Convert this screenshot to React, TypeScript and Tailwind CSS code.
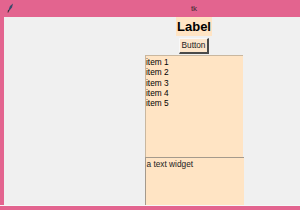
import React from "react";

export default function App() {
  const font = { fontFamily: '"Liberation Sans", Arial, sans-serif' };
  return (
    <div className="w-[300px] h-[210px] overflow-hidden bg-[#e3648f]" style={font}>
      <div className="w-[388px] flex flex-col">
        <div className="h-[17px] relative flex items-center bg-[#e3648f]">
          <svg className="absolute left-[7px] top-[3px]" width="7" height="10" viewBox="0 0 7 10">
            <path d="M6 0.5 L3 3 L1.5 7 L1 9.5 L2.5 7.5 L5 4.5 Z" fill="#3b4a6b" />
            <path d="M1.5 7 L1 9.5" stroke="#222" strokeWidth="0.8" />
          </svg>
          <div className="flex-1 text-center text-[8px] leading-[17px] text-[#3a2a30]">tk</div>
        </div>
        <div className="flex">
          <div className="w-[4px] bg-[#e3648f]" />
          <div className="flex-1 h-[188px] bg-[#f0f0f0] flex flex-col items-center">
            <div className="h-[19px] px-[1px] bg-[#ffe4c4] text-[13px] leading-[19px] font-bold text-black">Label</div>
            <div className="mt-[2px] h-[16px] w-[30px] bg-[#fde6cc] border-t border-l border-[#f8f8f8] border-r-2 border-b-2 border-r-[#4a4a4a] border-b-[#4a4a4a] flex items-center justify-center text-[8.3px] text-[#222]">
              Button
            </div>
            <div className="mt-px w-[98px] h-[103px] bg-[#ffe4c4] border-t border-l border-[#c9b79f] text-[8.3px] leading-[10.3px] text-black pt-[1px]">
              <div>item 1</div>
              <div>item 2</div>
              <div>item 3</div>
              <div>item 4</div>
              <div>item 5</div>
            </div>
            <div className="w-[99px] h-[48px] bg-[#ffe4c4] border-t border-l border-[#a59a8c] text-[8.3px] leading-[11px] text-[#222] pt-[1px] pl-[1px]">
              a text widget
            </div>
          </div>
          <div className="w-[4px] bg-[#e3648f]" />
        </div>
        <div className="h-px bg-[#f7f7f7]" />
        <div className="h-[5px] bg-[#e3648f]" />
      </div>
    </div>
  );
}
